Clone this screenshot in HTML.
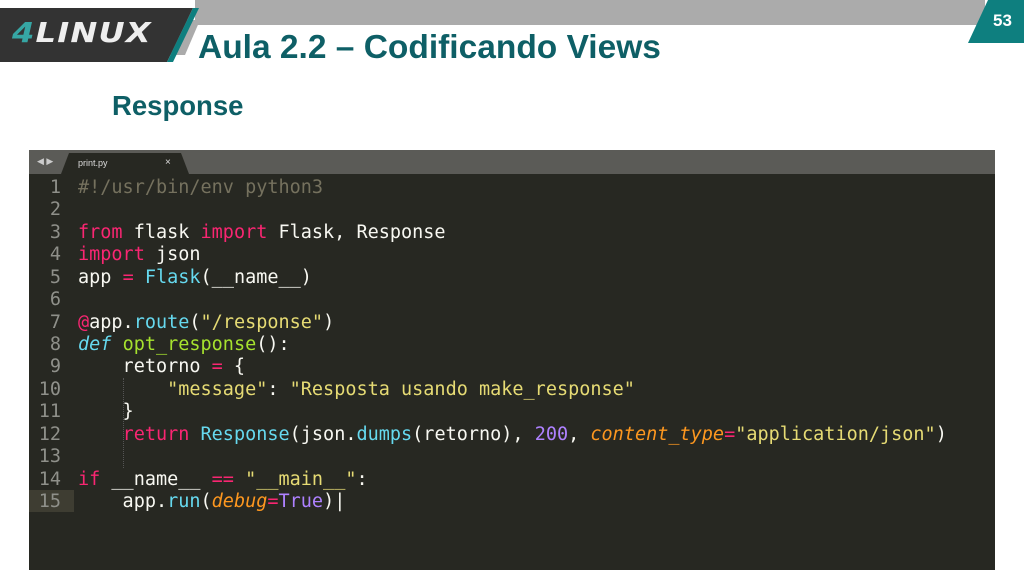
<!DOCTYPE html>
<html><head><meta charset="utf-8"><style>
body{margin:0;width:1024px;height:576px;background:#fff;position:relative;overflow:hidden;font-family:"Liberation Sans",sans-serif}
.abs{position:absolute}
.code{position:absolute;left:29px;top:150px;width:966px;height:420px;background:#272822}
.tabbar{position:absolute;left:0;top:0;width:966px;height:24px;background:#5b5b57}
.ln{position:absolute;left:0;width:32px;text-align:right;color:#8f908a}
.line{position:absolute;left:49px;white-space:pre;color:#f8f8f2}
.m{position:absolute;left:0;top:2px;font-family:"DejaVu Sans Mono","Liberation Mono",monospace;font-size:18.5px;line-height:22.43px}
.k{color:#f92672}.c{color:#75715e}.s{color:#e6db74}.f{color:#66d9ef}.g{color:#a6e22e}.n{color:#ae81ff}.i{color:#fd971f;font-style:italic}.d{color:#66d9ef;font-style:italic}
</style></head><body>
<div class="abs" style="left:195px;top:0;width:790px;height:25px;background:#ababab"></div>
<svg class="abs" style="left:0;top:0" width="260" height="70">
<polygon points="170,20 200,20 185,55 150,55" fill="#ababab"/>
<polygon points="0,8 193,8 167,62 0,62" fill="#333333"/>
<polygon points="193,8 199,8 173,62 167,62" fill="#0e7f7f"/>
</svg>
<div class="abs" style="left:12px;top:16px;font:italic 900 28px 'DejaVu Sans',sans-serif;transform:scaleX(1.15);transform-origin:left;letter-spacing:1px"><span style="color:#36a6a4">4</span><span style="color:#eee">LINUX</span></div>
<svg class="abs" style="left:968px;top:0" width="56" height="43"><polygon points="20,0 56,0 56,43 0,43" fill="#0e7f7f"/></svg>
<div class="abs" style="left:993px;top:11px;color:#fff;font-weight:bold;font-size:17px">53</div>
<div class="abs" style="left:198px;top:29px;color:#0e5f66;font-weight:bold;font-size:33.5px">Aula 2.2 – Codificando Views</div>
<div class="abs" style="left:112px;top:90px;color:#0e5f66;font-weight:bold;font-size:27.5px">Response</div>
<div class="code">
<div class="tabbar"></div>
<div class="abs" style="left:8px;top:6px;color:#ccc;font-size:9px">◀ ▶</div>
<svg class="abs" style="left:32px;top:3px" width="130" height="21"><polygon points="8,0 120,0 128,21 0,21" fill="#272822"/></svg>
<div class="abs" style="left:49px;top:8px;color:#ddd;font-size:9px">print.py</div>
<div class="abs" style="left:136px;top:7px;color:#ddd;font-size:10px">×</div>
<div class="abs" style="left:0;top:340px;width:45px;height:22px;background:#3e3d32"></div>
<div class="abs" style="left:94px;top:228px;height:90px;border-left:1px dotted #555"></div>
<div class="m">
<div class="ln" style="top:25px">1</div><div class="line" style="top:25px"><span class="c">#!/usr/bin/env python3</span></div>
<div class="ln" style="top:47.4px">2</div>
<div class="ln" style="top:69.9px">3</div><div class="line" style="top:69.9px"><span class="k">from</span> flask <span class="k">import</span> Flask, Response</div>
<div class="ln" style="top:92.3px">4</div><div class="line" style="top:92.3px"><span class="k">import</span> json</div>
<div class="ln" style="top:114.7px">5</div><div class="line" style="top:114.7px">app <span class="k">=</span> <span class="f">Flask</span>(__name__)</div>
<div class="ln" style="top:137.2px">6</div>
<div class="ln" style="top:159.6px">7</div><div class="line" style="top:159.6px"><span class="k">@</span>app.<span class="f">route</span>(<span class="s">"/response"</span>)</div>
<div class="ln" style="top:182px">8</div><div class="line" style="top:182px"><span class="d">def</span> <span class="g">opt_response</span>():</div>
<div class="ln" style="top:204.4px">9</div><div class="line" style="top:204.4px">    retorno <span class="k">=</span> {</div>
<div class="ln" style="top:226.9px">10</div><div class="line" style="top:226.9px">        <span class="s">"message"</span>: <span class="s">"Resposta usando make_response"</span></div>
<div class="ln" style="top:249.3px">11</div><div class="line" style="top:249.3px">    }</div>
<div class="ln" style="top:271.7px">12</div><div class="line" style="top:271.7px">    <span class="k">return</span> <span class="f">Response</span>(json.<span class="f">dumps</span>(retorno), <span class="n">200</span>, <span class="i">content_type</span><span class="k">=</span><span class="s">"application/json"</span>)</div>
<div class="ln" style="top:294.2px">13</div>
<div class="ln" style="top:316.6px">14</div><div class="line" style="top:316.6px"><span class="k">if</span> __name__ <span class="k">==</span> <span class="s">"__main__"</span>:</div>
<div class="ln" style="top:339px">15</div><div class="line" style="top:339px">    app.<span class="f">run</span>(<span class="i">debug</span><span class="k">=</span><span class="n">True</span>)|</div>
</div>
</div>
</body></html>
